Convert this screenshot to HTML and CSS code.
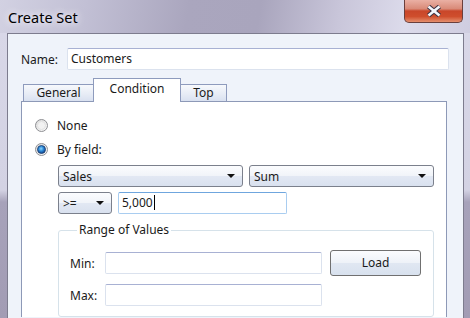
FILE: index.html
```html
<!DOCTYPE html>
<html>
<head>
  <meta charset="UTF-8">
  <title>Create Set</title>
  <link rel="stylesheet" href="styles.css">
</head>
<body>

<svg class="defs" width="0" height="0">
  <defs>
    <linearGradient id="radioFill" x1="0" y1="0" x2="1" y2="1">
      <stop offset="0" stop-color="#d9d9d9"/>
      <stop offset="1" stop-color="#fbfbfb"/>
    </linearGradient>
    <radialGradient id="radioDot" cx="0.45" cy="0.4" r="0.6">
      <stop offset="0" stop-color="#8fd8ff"/>
      <stop offset="0.5" stop-color="#2c88d6"/>
      <stop offset="1" stop-color="#0d3f88"/>
    </radialGradient>
  </defs>
</svg>

<div class="window">
  <div class="titlebar">
    <span class="title">Create Set</span>
    <div class="close-btn">
      <svg width="16" height="12" viewBox="0 0 16 12">
        <line x1="2.5" y1="1.5" x2="13.5" y2="10.5" stroke="#3a3040" stroke-width="4.6"/>
        <line x1="13.5" y1="1.5" x2="2.5" y2="10.5" stroke="#3a3040" stroke-width="4.6"/>
        <line x1="2.5" y1="1.5" x2="13.5" y2="10.5" stroke="#f4f6fb" stroke-width="2.6"/>
        <line x1="13.5" y1="1.5" x2="2.5" y2="10.5" stroke="#f4f6fb" stroke-width="2.6"/>
      </svg>
    </div>
  </div>

  <div class="client">
    <div class="name-row">
      <span class="name-label">Name:</span>
      <div class="textbox name-box">Customers</div>
    </div>

    <div class="tabs">
      <div class="tab tab-general">General</div>
      <div class="tab tab-condition active">Condition</div>
      <div class="tab tab-top">Top</div>
    </div>

    <div class="panel">
      <div class="radio-row">
        <svg class="radio" width="13" height="13" viewBox="0 0 13 13">
          <circle cx="6.5" cy="6.5" r="6" fill="url(#radioFill)" stroke="#8e8f93"/>
          <circle cx="6.5" cy="6.5" r="4" fill="#f2f2f2" stroke="#e2e2e2"/>
        </svg>
        None
      </div>
      <div class="radio-row">
        <svg class="radio" width="13" height="13" viewBox="0 0 13 13">
          <circle cx="6.5" cy="6.5" r="6" fill="url(#radioFill)" stroke="#8e8f93"/>
          <circle cx="6.5" cy="6.5" r="4" fill="url(#radioDot)" stroke="#1c3e70" stroke-width="0.8"/>
        </svg>
        By field:
      </div>

      <div class="field-block">
        <div class="combo-row">
          <div class="combo combo-wide">Sales<span class="arrow"></span></div>
          <div class="combo combo-wide">Sum<span class="arrow"></span></div>
        </div>
        <div class="combo-row">
          <div class="combo combo-small">&gt;=<span class="arrow"></span></div>
          <div class="textbox value-box">5,000<span class="caret"></span></div>
        </div>

        <fieldset class="range">
          <legend>Range of Values</legend>
          <div class="range-body">
            <div class="range-fields">
              <div class="range-row">
                <span class="range-label">Min:</span>
                <div class="textbox range-box"></div>
              </div>
              <div class="range-row">
                <span class="range-label">Max:</span>
                <div class="textbox range-box"></div>
              </div>
            </div>
            <div class="button">Load</div>
          </div>
        </fieldset>
      </div>
    </div>
  </div>
</div>

</body>
</html>
```

FILE: styles.css
```css
html, body {
  margin: 0;
  padding: 0;
}
*, *:before, *:after {
  box-sizing: border-box;
}
body {
  width: 470px;
  height: 318px;
  overflow: hidden;
  font-family: "Noto Sans", "Open Sans", sans-serif;
  font-size: 12px;
  color: #1a1a1a;
}
.defs {
  position: absolute;
}
.window {
  display: flex;
  flex-direction: column;
  height: 318px;
  overflow: hidden;
  background: linear-gradient(to bottom, #d9d8e8 0, #d3d2e3 190px, #a7a2ba 202px, #a29cb4 318px);
}
.titlebar {
  display: flex;
  flex-shrink: 0;
  height: 33px;
  padding-left: 8px;
  background: linear-gradient(100deg, #d2d1e2 0%, #c2c0d5 18%, #aaa6be 40%, #a9a5bd 55%, #c9c6da 72%, #dcdbeb 86%, #cfcde0 100%);
}
.title {
  font-size: 14.5px;
  line-height: 20px;
  padding-top: 7px;
  color: #000;
  text-shadow: 0 0 6px #f4f2fa, 0 0 10px #ecebf5;
}
.close-btn {
  display: flex;
  align-items: center;
  justify-content: center;
  margin-left: auto;
  margin-right: 7px;
  width: 59px;
  height: 23px;
  border: 1px solid #6a3f3c;
  border-top: none;
  border-radius: 0 0 5px 5px;
  background: linear-gradient(to bottom, #eab0a4 0%, #d98a78 40%, #c9462a 50%, #cf4e2d 75%, #e58f6e 100%);
}
.client {
  flex: 1;
  min-height: 0;
  overflow: hidden;
  margin: 0 6px 0 7px;
  border: 1px solid #7d7c8e;
  border-bottom: none;
  background-color: #eff3fa;
  padding: 14px 0 0 13px;
}
.name-row {
  display: flex;
  align-items: center;
}
.name-label {
  width: 46px;
}
.textbox {
  height: 22px;
  line-height: 20px;
  padding-left: 3px;
  background-color: #fff;
  border: 1px solid #dbe2ee;
  border-top-color: #a8b1d3;
  border-radius: 2px;
}
.name-box {
  width: 382px;
}
.tabs {
  display: flex;
  align-items: flex-end;
  height: 23px;
  margin-top: 8px;
  padding-left: 2px;
}
.tab {
  height: 17px;
  line-height: 16px;
  text-align: center;
  border: 1px solid #8e9bbd;
  border-bottom: none;
  background: linear-gradient(to bottom, #f7f9fc, #e6ebf5 60%, #d9e1f0);
}
.tab-general {
  width: 71px;
}
.tab-condition {
  width: 88px;
  margin-left: -1px;
}
.tab-top {
  width: 47px;
  margin-left: -1px;
}
.tab.active {
  position: relative;
  height: 24px;
  margin-bottom: -1px;
  line-height: 20px;
  background: #fff;
  z-index: 1;
}
.panel {
  width: 426px;
  background-color: #fff;
  border: 1px solid #8d99b7;
  border-bottom: none;
  padding: 11px 0 0 13px;
}
.radio-row {
  display: flex;
  align-items: center;
  height: 24px;
}
.radio {
  margin-right: 9px;
}
.field-block {
  margin-left: 23px;
  padding-top: 4px;
  width: 376px;
}
.combo-row {
  display: flex;
  gap: 6px;
  margin-bottom: 5px;
}
.combo {
  display: flex;
  align-items: center;
  height: 22px;
  padding-left: 4px;
  border: 1px solid #7b808c;
  border-radius: 3px;
  background: linear-gradient(to bottom, #fbfcfe 0%, #f1f4f9 48%, #e2e8f3 52%, #d9e1ef 100%);
}
.combo-wide {
  width: 185px;
}
.combo-small {
  width: 54px;
}
.arrow {
  margin-left: auto;
  margin-right: 7px;
  border-left: 4px solid transparent;
  border-right: 4px solid transparent;
  border-top: 4px solid #111;
}
.value-box {
  width: 169px;
  border-color: #a9cdf0;
  border-top-color: #6fa6de;
}
.caret {
  display: inline-block;
  width: 1px;
  height: 15px;
  margin-left: 1px;
  vertical-align: -3px;
  background-color: #000;
}
.range {
  margin: 8px 0 0;
  padding: 0 0 10px 11px;
  border: 1px solid #d6e2ea;
  border-radius: 3px;
  width: 376px;
}
.range legend {
  margin-left: 7px;
  padding: 0 2px;
  line-height: 16px;
}
.range-body {
  display: flex;
  align-items: flex-start;
  padding-top: 14px;
}
.range-row {
  display: flex;
  align-items: center;
}
.range-row + .range-row {
  margin-top: 10px;
}
.range-label {
  width: 35px;
}
.range-box {
  width: 217px;
}
.button {
  width: 91px;
  height: 26px;
  margin: -2px 0 0 8px;
  line-height: 24px;
  text-align: center;
  border: 1px solid #707070;
  border-radius: 3px;
  background: linear-gradient(to bottom, #fbfcfe 0%, #eef2f8 48%, #e0e7f2 52%, #d8e1ee 100%);
}
```
